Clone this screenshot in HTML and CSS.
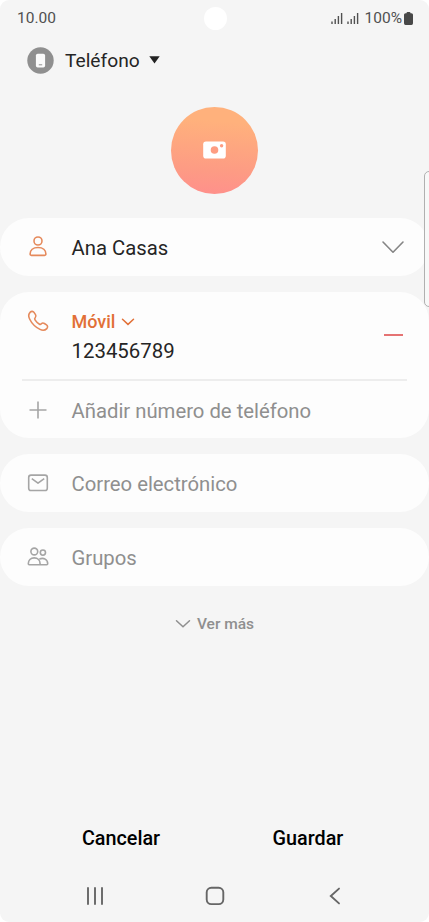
FILE: index.html
```html
<!DOCTYPE html>
<html lang="es">
<head>
<meta charset="UTF-8">
<meta name="viewport" content="width=device-width, initial-scale=1.0">
<title>Crear contacto</title>
<link rel="stylesheet" href="styles.css">
</head>
<body>
<div class="screen">
<header class="status-bar">
<span class="clock">10.00</span>
<span class="camera-hole"></span>
<div class="status-right">
<svg class="signal" width="12" height="13" viewBox="0 0 12 13"><path d="M1 9.5V12M4.2 7V12M7.4 4V12M10.6 1V12"/></svg>
<svg class="signal" width="12" height="13" viewBox="0 0 12 13"><path d="M1 9.5V12M4.2 7V12M7.4 4V12M10.6 1V12"/></svg>
<span class="percent">100%</span>
<svg class="battery" width="9" height="13" viewBox="0 0 9 13"><path d="M2.5 1.2Q2.5 0 3.5 0H5.5Q6.5 0 6.5 1.2H7.5Q9 1.2 9 2.7V11.3Q9 13 7.5 13H1.5Q0 13 0 11.3V2.7Q0 1.2 1.5 1.2Z"/></svg>
</div>
</header>

<div class="storage">
<svg width="27" height="27" viewBox="0 0 27 27"><circle cx="13.5" cy="13.5" r="13.2" fill="#8f8f8f"/><rect x="8.9" y="6.7" width="9.2" height="13.8" rx="1.8" fill="#fafafa"/><path d="M11.8 17.8H15.2" stroke="#8f8f8f" stroke-width="1"/></svg>
<span class="storage-name">Teléfono</span>
<svg class="arrow" width="11" height="8" viewBox="0 0 11 8"><path d="M.3 .2H10.7L5.5 7.6Z" fill="#222"/></svg>
</div>

<div class="photo">
<svg width="23" height="18" viewBox="0 0 23 18"><rect x=".2" y=".5" width="22.6" height="17" rx="2.8" fill="#fff"/><circle cx="11.5" cy="9" r="3.8" fill="#fe9d82"/><circle cx="18.6" cy="4.7" r="1.7" fill="#fe9d82"/></svg>
</div>

<main class="cards">
<section class="card">
<div class="row">
<svg class="icon orange" width="24" height="24" viewBox="0 0 24 24"><circle cx="12" cy="6" r="4"/><path d="M4.1 19.1C4.1 15.2 7 12.5 12 12.5S19.9 15.2 19.9 19.1Q19.9 20.4 18.6 20.4H5.4Q4.1 20.4 4.1 19.1Z"/></svg>
<span class="name">Ana Casas</span>
<svg class="expand" width="24" height="14" viewBox="0 0 24 14"><path d="M2 2L12 12.2L22 2"/></svg>
</div>
</section>

<section class="card">
<div class="phone">
<svg class="icon orange" width="24" height="24" viewBox="0 0 24 24"><path d="M4.3 3.1C5.4 2 7.1 2.1 8 3.4L9.5 5.6C10.2 6.7 10 7.9 9.2 8.7C8.5 9.4 8.5 10 9 10.8C10.1 12.5 11.5 13.9 13.2 15C14 15.5 14.7 15.5 15.3 14.8C16.1 14 17.3 13.8 18.4 14.5L20.5 15.9C21.8 16.8 21.9 18.5 20.8 19.6C19 21.4 16.6 21.7 14 20.4C9.5 18.2 5.8 14.5 3.6 10C2.3 7.4 2.5 4.9 4.3 3.1Z"/></svg>
<div class="phone-info">
<div class="phone-type">Móvil <svg width="14" height="8" viewBox="0 0 14 8"><path d="M1.5 1.3L7 6.4L12.5 1.3"/></svg></div>
<div class="number">123456789</div>
</div>
<span class="remove"></span>
</div>
<div class="row add">
<svg class="icon gray" width="24" height="24" viewBox="0 0 24 24"><path d="M12 3.5V20.5M3.5 12H20.5"/></svg>
<span class="hint">Añadir número de teléfono</span>
</div>
</section>

<section class="card">
<div class="row">
<svg class="icon gray" width="24" height="24" viewBox="0 0 24 24"><rect x="2.7" y="4.1" width="18.6" height="15.4" rx="2.3"/><path d="M5.8 7.6L12 12.2L18.2 7.6"/></svg>
<span class="hint">Correo electrónico</span>
</div>
</section>

<section class="card">
<div class="row">
<svg class="icon gray" width="24" height="24" viewBox="0 0 24 24"><circle cx="8.3" cy="6.5" r="3.4"/><circle cx="16.9" cy="7.6" r="2.6"/><path d="M2.3 18.8C2.3 15.3 4.6 12.9 8.2 12.9S14.1 15.3 14.1 18.8Q14.1 19.7 13.2 19.7H3.2Q2.3 19.7 2.3 18.8ZM13.4 14.1C17.8 12.1 21.7 14.7 21.7 18.7Q21.7 19.7 20.7 19.7H13.2"/></svg>
<span class="hint">Grupos</span>
</div>
</section>
</main>

<div class="more">
<svg width="16" height="10" viewBox="0 0 16 10"><path d="M1.5 1.7L8 7.8L14.5 1.7"/></svg>
<span>Ver más</span>
</div>

<footer class="bottom">
<div class="actions">
<span class="action">Cancelar</span>
<span class="action">Guardar</span>
</div>
<nav class="nav">
<svg width="20" height="20" viewBox="0 0 20 20"><path d="M3 2V18M10 2V18M17 2V18"/></svg>
<svg width="20" height="20" viewBox="0 0 20 20"><rect x="1.7" y="1.7" width="16.6" height="16.4" rx="4.6"/></svg>
<svg width="20" height="20" viewBox="0 0 20 20"><path d="M14 2.6L5.8 10L14 17.4"/></svg>
</nav>
</footer>
<div class="edge-handle"></div>
</div>
</body>
</html>
```

FILE: styles.css
```css
body {
margin: 0;
background-color: #fff;
font-family: Roboto, sans-serif;
color: #252525;
}

.screen {
position: relative;
display: flex;
flex-direction: column;
height: 922px;
overflow: hidden;
background-color: #f5f5f5;
border-radius: 9px;
}

svg {
flex: none;
fill: none;
}

.status-bar {
display: grid;
grid-template-columns: 1fr 23px 1fr;
align-items: center;
height: 36px;
padding: 0 16px 0 17px;
font-size: 15.5px;
color: #505050;
}

.camera-hole {
width: 23px;
height: 23px;
border-radius: 50%;
background-color: #fff;
}

.status-right {
display: flex;
align-items: center;
justify-content: flex-end;
}

.signal {
stroke: #505050;
stroke-width: 1.4;
margin-right: 4.5px;
}

.percent {
margin: 0 2px 0 1px;
}

.battery {
fill: #484848;
}

.storage {
display: flex;
align-items: center;
height: 48px;
padding-left: 26.5px;
}

.storage-name {
margin: 1px 0 0 11.5px;
font-size: 19.2px;
}

.arrow {
margin: -1px 0 0 9px;
}

.photo {
display: flex;
align-items: center;
justify-content: center;
width: 87px;
height: 87px;
margin: 23px auto 24px;
border-radius: 50%;
background: linear-gradient(184deg, #ffb17c 18%, #fd9b84 72%, #ff8f8c);
}

.photo svg {
margin-top: -1px;
}

.cards {
display: flex;
flex-direction: column;
gap: 16px;
}

.card {
border-radius: 29px;
background-color: #fdfdfd;
}

.row {
display: flex;
align-items: center;
height: 57.8px;
padding: 0 24px 0 26px;
font-size: 20.3px;
}

.row span {
margin-top: 2px;
}

.icon {
margin-right: 21.5px;
stroke-width: 1.6;
stroke-linejoin: round;
}

.orange {
stroke: #e58a5c;
}

.gray {
stroke: #a5a5a5;
}

.expand {
margin-left: auto;
stroke: #858585;
stroke-width: 1.6;
stroke-linecap: round;
stroke-linejoin: round;
}

.phone {
display: flex;
height: 87px;
padding: 0 26px 0 26px;
}

.phone .icon {
margin-top: 17px;
}

.phone-info {
padding-top: 18px;
}

.phone-type {
font-size: 18px;
line-height: 24px;
font-weight: 500;
color: #e27037;
}

.phone-type svg {
margin-left: 1px;
vertical-align: 2px;
stroke: #e27037;
stroke-width: 1.5;
stroke-linecap: round;
}

.number {
font-size: 20.4px;
line-height: 34px;
}

.remove {
align-self: center;
width: 19px;
height: 2px;
margin-left: auto;
background-color: #e57373;
}

.add {
margin: 0 22px;
padding: 0 0 0 4px;
border-top: 2px solid #ededed;
height: 57.5px;
}

.hint {
color: #8f8f8f;
}

.more {
display: flex;
align-items: center;
justify-content: center;
gap: 6px;
height: 24px;
margin-top: 26px;
font-size: 15.5px;
font-weight: 500;
color: #8f8f8f;
}

.more svg {
stroke: #8f8f8f;
stroke-width: 1.5;
stroke-linecap: round;
}

.bottom {
margin-top: auto;
}

.actions {
display: grid;
grid-template-columns: 187px 187px;
justify-content: center;
text-align: center;
font-size: 19.8px;
line-height: 24px;
font-weight: 500;
color: #000;
}

.nav {
display: flex;
justify-content: space-between;
padding: 35px 84px 16px 85px;
stroke: #666;
stroke-width: 1.9;
stroke-linecap: round;
}

.edge-handle {
position: absolute;
right: -7px;
top: 171px;
width: 10px;
height: 134px;
border: 1px solid #b0b0b0;
border-radius: 5px;
background-color: #f8f8f8;
}
```
